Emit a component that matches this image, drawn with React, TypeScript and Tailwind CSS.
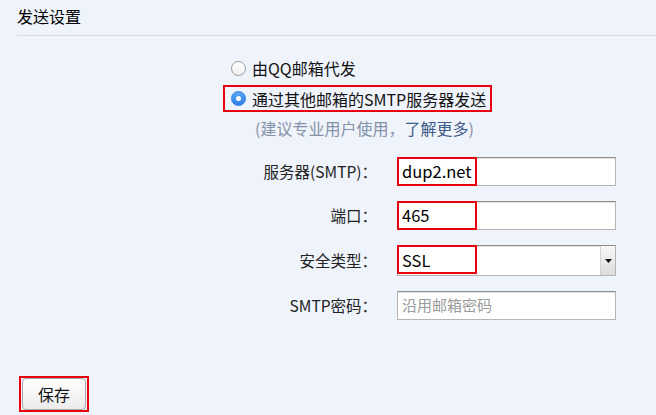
import React from "react";

const font = { fontFamily: '"Noto Sans CJK SC", "Noto Sans", sans-serif' };

function Radio({ checked }: { checked?: boolean }) {
  if (checked) {
    return (
      <span className="inline-flex h-[15px] w-[15px] items-center justify-center rounded-full border border-[#2f7fe0] bg-gradient-to-b from-[#5aa6f5] to-[#2c7fe6]">
        <span className="h-[5px] w-[5px] rounded-full bg-white" />
      </span>
    );
  }
  return (
    <span className="inline-block h-[15px] w-[15px] rounded-full border border-[#9a9a9a] bg-gradient-to-b from-white to-[#f0f0f0]" />
  );
}

function Field({
  label,
  value,
  placeholder,
  select,
  boxed,
}: {
  label: string;
  value?: string;
  placeholder?: string;
  select?: boolean;
  boxed?: boolean;
}) {
  return (
    <div className="flex items-center">
      <div className="w-[377px] text-right text-[15.5px] text-[#222]">{label}</div>
      <div
        className={`relative ml-[20px] flex w-[219px] items-center border border-[#b5b5b5] border-t-[#8c8c8c] bg-white ${
          select ? "h-[31px]" : "h-[29px]"
        }`}
      >
        <div className="absolute inset-x-0 top-0 h-[1px] bg-[#e2e2e2]" />
        {value ? (
          <span className="pl-[4px] text-[16.5px] text-black">{value}</span>
        ) : (
          <span className="pl-[4px] text-[15px] text-[#9a9a9a]">{placeholder}</span>
        )}
        {select && (
          <div className="absolute right-0 top-0 flex h-full w-[15px] items-center justify-center border-l border-[#d0d0d0] bg-gradient-to-b from-[#f7f7f7] to-[#dcdcdc]">
            <svg width="7" height="4" viewBox="0 0 7 4">
              <path d="M0 0h7L3.5 4z" fill="#111" />
            </svg>
          </div>
        )}
        {boxed && (
          <div className="pointer-events-none absolute left-[-1px] top-[-1px] h-[29px] w-[80px] border-2 border-[#e8000f]" />
        )}
      </div>
    </div>
  );
}

export default function App() {
  return (
    <div className="flex h-[415px] w-[656px] flex-col bg-[#eff3fb]" style={font}>
      <div className="ml-[17px] flex h-[36px] items-start border-b border-[#d4d8df] pt-[6px] text-[16px] leading-[20px] text-black">
        发送设置
      </div>

      <div className="ml-[223px] mt-[22px] flex flex-col items-start">
        <div className="ml-[8px] flex h-[20px] items-center gap-[6px] text-[16px] text-[#111]">
          <Radio />
          <span>由QQ邮箱代发</span>
        </div>
        <div className="mt-[7px] flex h-[27px] w-[269px] items-center gap-[6px] border-2 border-[#e8000f] pl-[6px] text-[16px] text-[#111]">
          <Radio checked />
          <span>通过其他邮箱的SMTP服务器发送</span>
        </div>
        <div className="ml-[32px] mt-[6px] h-[20px] text-[16px] leading-[20px] text-[#8592a8]">
          (建议专业用户使用，<span className="text-[#3e5a88]">了解更多</span>)
        </div>
      </div>

      <div className="mt-[19px] flex flex-col gap-[15px]">
        <Field label="服务器(SMTP)：" value="dup2.net" boxed />
        <Field label="端口：" value="465" boxed />
        <Field label="安全类型：" value="SSL" select boxed />
        <Field label="SMTP密码：" placeholder="沿用邮箱密码" />
      </div>

      <div className="ml-[19px] mt-auto mb-[3px] flex h-[36px] w-[70px] items-center justify-center border-2 border-[#e8000f]">
        <button className="flex h-[32px] w-[64px] items-center justify-center rounded-[4px] border border-[#a8a8a8] bg-gradient-to-b from-white to-[#ececec] text-[16px] text-[#111]">
          保存
        </button>
      </div>
    </div>
  );
}
